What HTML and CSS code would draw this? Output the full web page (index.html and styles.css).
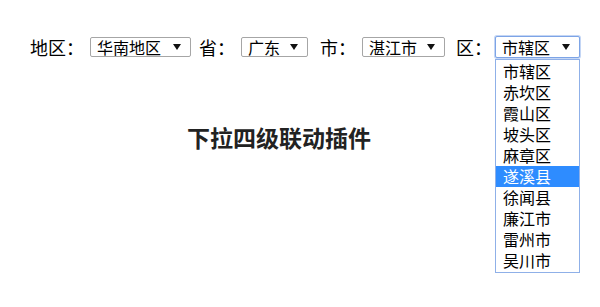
FILE: index.html
```html
<!DOCTYPE html>
<html lang="zh-CN">
<head>
<meta charset="utf-8">
<title>下拉四级联动插件</title>
<link rel="stylesheet" href="styles.css">
</head>
<body>
<div class="page">
  <div class="row">
    <span class="label">地区：</span>
    <div class="select w1"><span class="val">华南地区</span><span class="arrow"></span></div>
    <span class="label l2">省：</span>
    <div class="select w2"><span class="val">广东</span><span class="arrow"></span></div>
    <span class="label l3">市：</span>
    <div class="select w3"><span class="val">湛江市</span><span class="arrow"></span></div>
    <span class="label l4">区：</span>
    <div class="select w4 focus"><span class="val">市辖区</span><span class="arrow"></span>
      <ul class="list">
        <li>市辖区</li>
        <li>赤坎区</li>
        <li>霞山区</li>
        <li>坡头区</li>
        <li>麻章区</li>
        <li class="sel">遂溪县</li>
        <li>徐闻县</li>
        <li>廉江市</li>
        <li>雷州市</li>
        <li>吴川市</li>
      </ul>
    </div>
  </div>
  <h1 class="title">下拉四级联动插件</h1>
</div>
</body>
</html>
```
FILE: styles.css
```css
html, body {
  margin: 0;
  padding: 0;
  background: #fff;
}
body {
  font-family: "Noto Sans CJK SC", "Noto Sans", sans-serif;
  color: #000;
}
.page {
  box-sizing: border-box;
  min-height: 307px;
  padding: 37px 0 0 30px;
}
.row {
  display: flex;
  align-items: center;
  height: 20px;
  position: relative;
  z-index: 2;
}
.label {
  font-size: 18px;
  line-height: 20px;
  margin-right: 6px;
  white-space: nowrap;
}
.l2 { margin-left: 8px; }
.l3 { margin-left: 12px; margin-right: 6px; }
.l4 { margin-left: 11px; margin-right: 3px; }
.select {
  position: relative;
  box-sizing: border-box;
  height: 20px;
  border: 1px solid #a6a6a6;
  border-radius: 2px;
  display: flex;
  align-items: center;
  justify-content: space-between;
  padding: 0 9px 0 6px;
  background: #fff;
}
.w1 { width: 101px; }
.w2 { width: 67px; }
.w3 { width: 83px; }
.w4 { width: 85px; height: 22px; }
.focus {
  border-color: #7da4e6;
  box-shadow: 0 0 0 1px #c4d6f5;
}
.val {
  font-size: 16px;
  line-height: 18px;
  white-space: nowrap;
}
.arrow {
  width: 0;
  height: 0;
  border-left: 4px solid transparent;
  border-right: 4px solid transparent;
  border-top: 6px solid #111;
}
.list {
  position: absolute;
  left: -1px;
  top: 22px;
  width: 85px;
  box-sizing: border-box;
  margin: 0;
  padding: 1px 0;
  list-style: none;
  border: 1px solid #8fb0e8;
  background: #fff;
  z-index: 5;
}
.list li {
  font-size: 16px;
  line-height: 21px;
  height: 21px;
  padding-left: 7px;
  white-space: nowrap;
}
.list li.sel {
  background: #2e8cff;
  color: #fff;
}
.title {
  margin: 65px 0 0 0;
  width: 498px;
  text-align: center;
  font-size: 23px;
  line-height: 30px;
  font-weight: bold;
  color: #222;
}
```
